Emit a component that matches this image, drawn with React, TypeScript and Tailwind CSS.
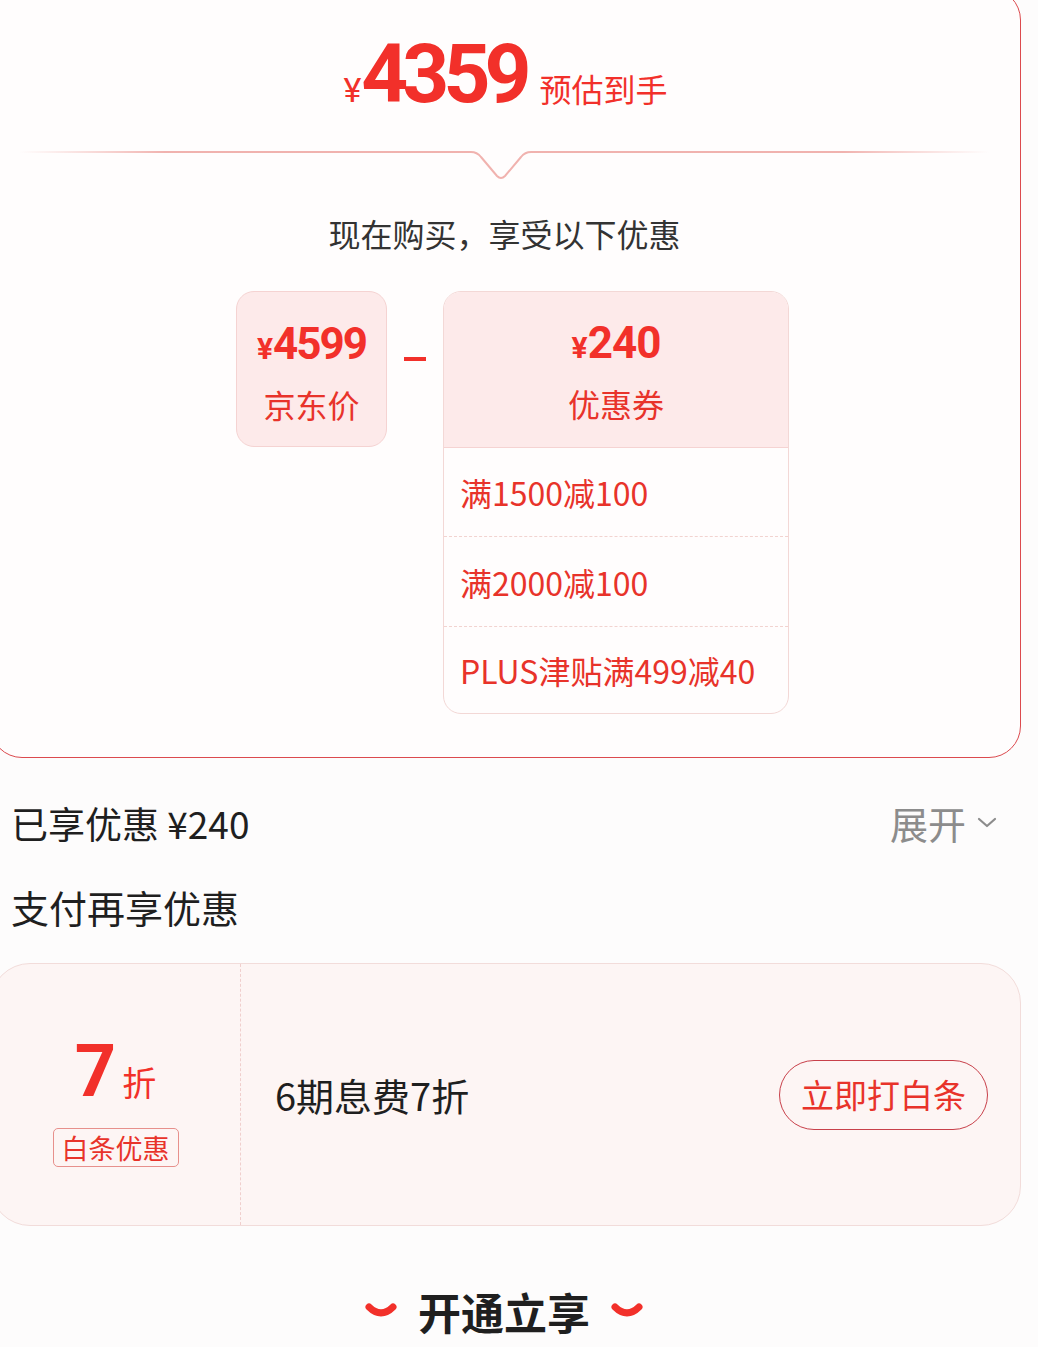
import React from "react";

const cn = '"Noto Sans CJK SC", "Noto Sans", sans-serif';
const num = 'Roboto, "Noto Sans CJK SC", sans-serif';

function Divider() {
  return (
    <svg width="970" height="34" viewBox="0 0 970 34" className="block">
      <defs>
        <linearGradient id="lg" x1="0" x2="1" y1="0" y2="0">
          <stop offset="0" stopColor="#f3b9b6" stopOpacity="0" />
          <stop offset="0.15" stopColor="#efaaa6" stopOpacity="0.9" />
          <stop offset="0.85" stopColor="#efaaa6" stopOpacity="0.9" />
          <stop offset="1" stopColor="#f3b9b6" stopOpacity="0" />
        </linearGradient>
      </defs>
      <path
        d="M0 4 L452 4 Q458 4 462 9 L478 28 Q482 32 486 28 L502 9 Q506 4 512 4 L970 4"
        fill="none"
        stroke="url(#lg)"
        strokeWidth="2"
      />
    </svg>
  );
}

function Smile() {
  return (
    <svg width="34" height="20" viewBox="0 0 34 20">
      <path d="M5 5 Q17 17 29 5" fill="none" stroke="#f2302a" strokeWidth="7" strokeLinecap="round" />
    </svg>
  );
}

export default function App() {
  return (
    <div className="min-h-[1347px] w-[1038px] overflow-hidden bg-[#fdfcfc]" style={{ fontFamily: cn }}>
      {/* top card */}
      <div className="ml-[-10px] mt-[-12px] flex h-[770px] w-[1031px] flex-col items-center rounded-[32px] border border-[#dc4a4e] bg-[#fffdfd]">
        <div className="flex items-baseline pt-[44px] text-[#f2302a]">
          <span className="text-[34px] leading-none" style={{ fontFamily: num }}>¥</span>
          <span className="inline-block text-[82px] font-bold leading-none tracking-[-6px]" style={{ fontFamily: num }}>
            4359
          </span>
          <span className="ml-[14px] text-[32px] leading-none">预估到手</span>
        </div>
        <div className="mt-[33px] ml-[-4px]">
          <Divider />
        </div>
        <div className="mt-[35px] ml-[-2px] text-[32px] leading-none text-[#333]">现在购买，享受以下优惠</div>
        <div className="mt-[42px] flex items-start self-start pl-[245px]">
          <div className="flex h-[156px] w-[151px] flex-col items-center rounded-[18px] border border-[#f5d3d2] bg-[#fdeaea] pt-[30px]">
            <div className="flex items-baseline text-[#f2302a]" style={{ fontFamily: num }}>
              <span className="text-[30px] font-bold leading-none">¥</span>
              <span className="text-[44px] font-bold leading-none tracking-[-2px]">4599</span>
            </div>
            <div className="mt-[22px] text-[32px] leading-none text-[#e8332a]">京东价</div>
          </div>
          <div className="mx-[17px] mt-[66px] h-[4px] w-[22px] bg-[#f2302a]" />
          <div className="w-[346px] overflow-hidden rounded-[18px] border border-[#f3d8d6] bg-[#fffdfd]">
            <div className="flex h-[156px] flex-col items-center border-b border-[#f5d3d2] bg-[#fdeaea] pt-[29px]">
              <div className="flex items-baseline text-[#f2302a]" style={{ fontFamily: num }}>
                <span className="text-[30px] font-bold leading-none">¥</span>
                <span className="text-[44px] font-bold leading-none tracking-[-1px]">240</span>
              </div>
              <div className="mt-[22px] text-[32px] leading-none text-[#e8332a]">优惠券</div>
            </div>
            <div className="text-[32px] text-[#e8332a]">
              <div className="flex h-[89px] items-center border-b border-dashed border-[#f2d3d0] px-[16px]">满1500减100</div>
              <div className="flex h-[90px] items-center border-b border-dashed border-[#f2d3d0] px-[16px]">满2000减100</div>
              <div className="flex h-[86px] items-center px-[16px]">PLUS津贴满499减40</div>
            </div>
          </div>
        </div>
      </div>

      {/* enjoyed */}
      <div className="flex h-[130px] items-center justify-between pl-[11px] pr-[40px]">
        <div className="text-[37px] leading-none text-[#1f1f1f]">已享优惠 ¥240</div>
        <div className="flex items-center text-[38px] leading-none text-[#8c8c8c]">
          展开
          <svg width="22" height="14" viewBox="0 0 22 14" className="ml-[10px]">
            <path d="M3 3 L11 10 L19 3" fill="none" stroke="#8c8c8c" strokeWidth="2.2" strokeLinecap="round" strokeLinejoin="round" />
          </svg>
        </div>
      </div>
      <div className="pl-[11px] text-[38px] leading-none text-[#1f1f1f]">支付再享优惠</div>

      {/* payment card */}
      <div className="ml-[-10px] mt-[37px] flex h-[263px] w-[1031px] items-stretch rounded-[40px] border border-[#f2dcda] bg-[#fdf5f4]">
        <div className="flex w-[250px] flex-col items-center border-r border-dashed border-[#f0cfcd] pt-[72px]">
          <div className="flex items-baseline text-[#f2302a]">
            <span className="text-[72px] font-bold leading-none" style={{ fontFamily: num }}>7</span>
            <span className="ml-[6px] text-[34px] leading-none">折</span>
          </div>
          <div className="mt-[20px] rounded-[5px] border border-[#e7908c] px-[8px] py-[2px] text-[27px] leading-[33px] text-[#e8332a]">
            白条优惠
          </div>
        </div>
        <div className="flex flex-1 items-center justify-between pl-[34px] pr-[32px]">
          <div className="text-[38px] leading-none text-[#1f1f1f]">6期息费7折</div>
          <div className="flex h-[70px] w-[209px] items-center justify-center rounded-full border border-[#c8404a] text-[33px] leading-none text-[#e8332a]">
            立即打白条
          </div>
        </div>
      </div>

      {/* bottom */}
      <div className="mt-[64px] flex items-center justify-center gap-[20px] pr-[30px]">
        <Smile />
        <div className="text-[43px] font-bold leading-none text-[#1f1f1f]">开通立享</div>
        <Smile />
      </div>
    </div>
  );
}
